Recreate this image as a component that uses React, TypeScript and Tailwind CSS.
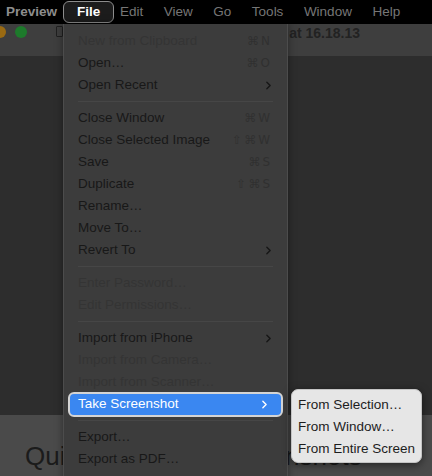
import { ChevronRight } from "lucide-react";

type Item =
  | { kind: "sep" }
  | { kind: "item"; label: string; keys?: string; sub?: boolean; off?: boolean; active?: boolean };

const items: Item[] = [
  { kind: "item", label: "New from Clipboard", keys: "⌘N", off: true },
  { kind: "item", label: "Open…", keys: "⌘O" },
  { kind: "item", label: "Open Recent", sub: true },
  { kind: "sep" },
  { kind: "item", label: "Close Window", keys: "⌘W" },
  { kind: "item", label: "Close Selected Image", keys: "⇧⌘W" },
  { kind: "item", label: "Save", keys: "⌘S" },
  { kind: "item", label: "Duplicate", keys: "⇧⌘S" },
  { kind: "item", label: "Rename…" },
  { kind: "item", label: "Move To…" },
  { kind: "item", label: "Revert To", sub: true },
  { kind: "sep" },
  { kind: "item", label: "Enter Password…", off: true },
  { kind: "item", label: "Edit Permissions…", off: true },
  { kind: "sep" },
  { kind: "item", label: "Import from iPhone", sub: true },
  { kind: "item", label: "Import from Camera…", off: true },
  { kind: "item", label: "Import from Scanner…", off: true },
  { kind: "item", label: "Take Screenshot", sub: true, active: true },
  { kind: "sep" },
  { kind: "item", label: "Export…" },
  { kind: "item", label: "Export as PDF…" },
];

const bar = ["Edit", "View", "Go", "Tools", "Window", "Help"];

const MenuRow = ({ item }: { item: Item }) => {
  if (item.kind === "sep") {
    return (
      <div className="h-[11px] flex items-center px-[14px]">
        <div className="h-px w-full bg-[#464646]" />
      </div>
    );
  }
  if (item.active) {
    return (
      <div className="h-[22px] px-[4px] flex items-center">
        <div className="h-[25px] w-full rounded-[6px] border-2 border-[#d4d4d4] bg-[#3a87f1] flex items-center pl-[8px] pr-[10px] text-white">
          <span className="flex-1">{item.label}</span>
          <ChevronRight size={13} strokeWidth={2.6} />
        </div>
      </div>
    );
  }
  return (
    <div
      className={`h-[22px] flex items-center pl-[14px] pr-[15px] ${
        item.off ? "text-[#343434]" : "text-[#181818]"
      }`}
    >
      <span className="flex-1">{item.label}</span>
      {item.keys && (
        <span className="text-[#303030] tracking-[2px] font-['DejaVu_Sans',sans-serif] text-[12px]">
          {item.keys}
        </span>
      )}
      {item.sub && <ChevronRight size={13} strokeWidth={2.6} className="text-[#161616] -mr-[3px]" />}
    </div>
  );
};

export default function App() {
  return (
    <div className="relative w-[432px] h-[476px] overflow-hidden bg-[#2d2d2d] font-['Liberation_Sans',Arial,sans-serif]">
      {/* dimmed window behind the menu */}
      <div className="flex flex-col h-full">
        <div className="h-[24px] bg-black flex items-center text-[13.5px] text-[#767676]">
          <span className="ml-[6px] font-bold text-[#8d8d8d]">Preview</span>
          <span className="ml-[6px] h-[22px] w-[51px] flex items-center justify-center rounded-[6px] border border-[#8c8c8c] bg-[#1c1c1c] font-bold text-white">
            File
          </span>
          <div className="ml-[6px] flex gap-[20.5px]">
            {bar.map((b) => (
              <span key={b}>{b}</span>
            ))}
          </div>
        </div>
        <div className="h-[32px] bg-[#3e3e3e] flex items-start pt-[1px]">
          <div className="flex items-center gap-[9px] -ml-[6px] pt-[1px]">
            <span className="w-[12px] h-[12px] rounded-full bg-[#9a6a12]" />
            <span className="w-[12px] h-[12px] rounded-full bg-[#1d7a2b]" />
          </div>
          <div className="ml-[29px] mt-[1px] w-[7px] h-[11px] border border-[#1f1f1f] rounded-[1px]" />
          <div className="flex-1 flex justify-end pr-[72px] text-[14px] font-bold text-[#222222] leading-[14px] pt-[1px]">
            Screenshot 2022-09-30 at 16.18.13
          </div>
        </div>
        <div className="h-[359px] bg-[#2d2d2d]" />
        <div className="flex-1 bg-[#4a4a4a] pl-[25px] pt-[22px] text-[26px] text-[#1b1b1b] whitespace-nowrap">
          Quick Access to Screenshots
        </div>
      </div>

      {/* File menu */}
      <div className="absolute left-[63px] top-[24px] w-[225px] h-[460px] bg-[#3c3c3c] border-x border-[#4c4c4c] pt-[6px] text-[13.5px] shadow-[0_0_8px_rgba(0,0,0,0.4)]">
        {items.map((it, i) => (
          <MenuRow key={i} item={it} />
        ))}
      </div>

      {/* Take Screenshot submenu */}
      <div className="absolute left-[291px] top-[389px] w-[131px] h-[74px] rounded-[7px] bg-[#e6e6e6] border border-[#c4c4c4] py-[4px] text-[13.5px] text-[#1d1d1d] shadow-[0_2px_8px_rgba(0,0,0,0.5)]">
        {["From Selection…", "From Window…", "From Entire Screen"].map((s) => (
          <div key={s} className="h-[22px] flex items-center pl-[6px] whitespace-nowrap">
            {s}
          </div>
        ))}
      </div>
    </div>
  );
}
